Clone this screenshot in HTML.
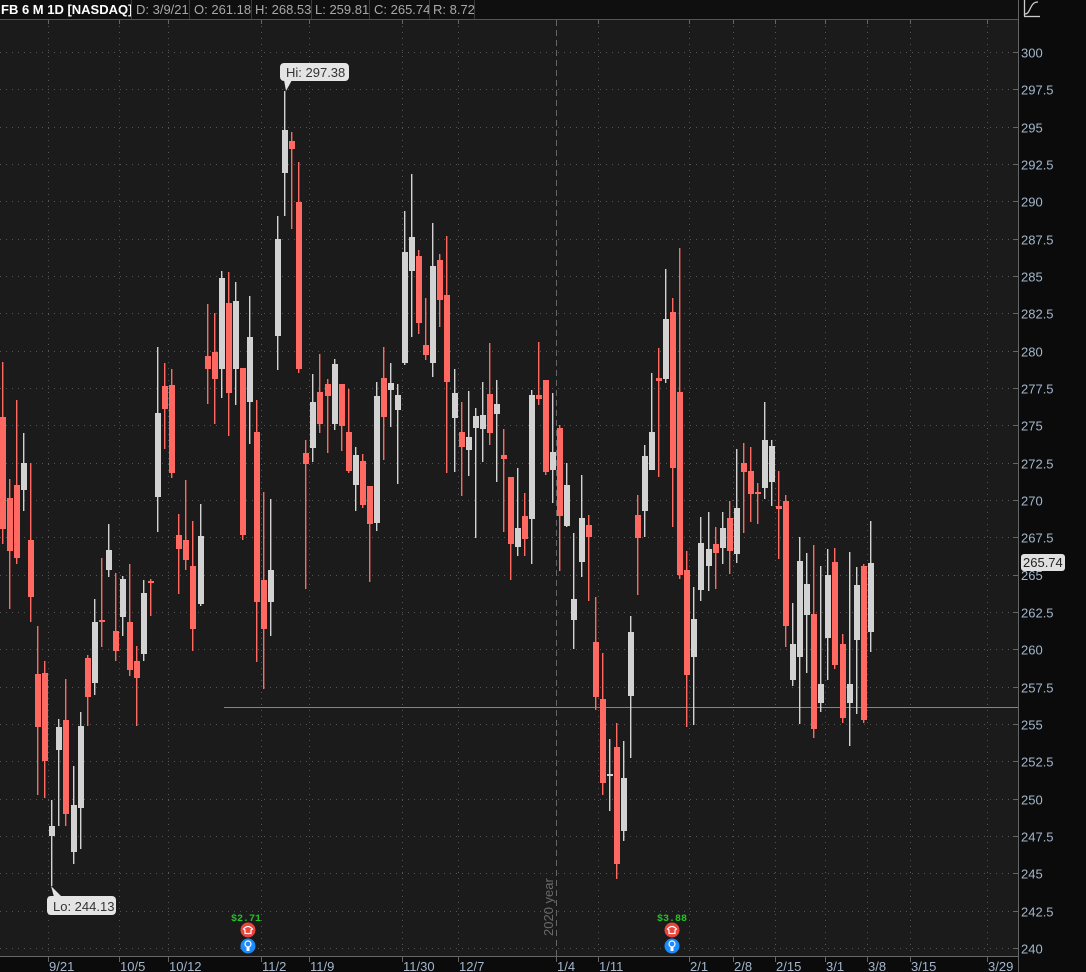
<!DOCTYPE html>
<html><head><meta charset="utf-8">
<style>
html,body{margin:0;padding:0;background:#0b0b0b;}
body{width:1086px;height:972px;overflow:hidden;position:relative;font-family:"Liberation Sans",sans-serif;}
#hdr{position:absolute;left:0;top:0;width:1018px;height:19px;background:#0f0f0f;border-bottom:1px solid #555;}
.seg{position:absolute;top:0;height:19px;line-height:19px;font-size:13px;color:#a8a8a8;white-space:nowrap;}
.dv{position:absolute;top:0;width:1px;height:19px;background:#3a3a3a;}
svg{position:absolute;left:0;top:0;}
</style></head><body>
<svg id="c" width="1086" height="972" xmlns="http://www.w3.org/2000/svg">
<rect x="0" y="20" width="1018" height="936" fill="#1b1b1b"/>
<g id="grid"></g>
<line x1="224" y1="707.5" x2="1018" y2="707.5" stroke="#d0655c" stroke-width="1"/>
<g id="candles"></g>
<line x1="1018.5" y1="0" x2="1018.5" y2="972" stroke="#666" stroke-width="1"/>
<line x1="0" y1="956.5" x2="1018" y2="956.5" stroke="#666" stroke-width="1"/>
<g id="axis" font-family="Liberation Sans, sans-serif" font-size="13" fill="#a3b6cc"></g>
<!-- Hi label -->
<path d="M284 80 L286 91 L292 80 Z" fill="#e4e4e4"/>
<rect x="280" y="63" width="69" height="18" rx="4" fill="#e4e4e4"/>
<text x="286" y="77" font-size="13" fill="#333" font-family="Liberation Sans, sans-serif">Hi: 297.38</text>
<!-- Lo label -->
<path d="M51 886 L54 897 L62 897 Z" fill="#e4e4e4"/>
<rect x="47" y="896" width="69" height="19" rx="4" fill="#e4e4e4"/>
<text x="53" y="911" font-size="13" fill="#333" font-family="Liberation Sans, sans-serif">Lo: 244.13</text>
<!-- price box -->
<rect x="1021" y="554" width="44" height="17" rx="3" fill="#e0e0e0"/>
<text x="1023" y="567" font-size="13" fill="#222" font-family="Liberation Sans, sans-serif">265.74</text>
<!-- 2020 year -->
<text transform="translate(553,936) rotate(-90)" font-size="13" fill="#6a6a6a" font-family="Liberation Sans, sans-serif">2020 year</text>
<!-- earnings -->
<g font-family="Liberation Mono, monospace" font-size="10" font-weight="bold" fill="#22c322">
<text x="231" y="921">$2.71</text><text x="657" y="921">$3.88</text></g>
<g id="earn"></g>
<!-- top right icon -->
<path d="M1025 14 C1028 14 1029 11 1031 7 C1033 3 1035 2 1038 2" stroke="#ccc" stroke-width="1.3" fill="none"/>
<line x1="1024" y1="16.5" x2="1040" y2="16.5" stroke="#ccc" stroke-width="1.3"/>
<line x1="1024.5" y1="0" x2="1024.5" y2="16" stroke="#ccc" stroke-width="1.3"/>
</svg>
<div id="hdr">
<div class="seg" style="left:1px;color:#fff;font-weight:bold;">FB 6 M 1D [NASDAQ]</div><div class="dv" style="left:131px"></div>
<div class="seg" style="left:136px">D: 3/9/21</div><div class="dv" style="left:189px"></div>
<div class="seg" style="left:194px">O: 261.18</div><div class="dv" style="left:251px"></div>
<div class="seg" style="left:255px">H: 268.53</div><div class="dv" style="left:311px"></div>
<div class="seg" style="left:315px">L: 259.81</div><div class="dv" style="left:369px"></div>
<div class="seg" style="left:374px">C: 265.74</div><div class="dv" style="left:429px"></div>
<div class="seg" style="left:433px">R: 8.72</div><div class="dv" style="left:474px"></div>
</div>
<script>
var NS="http://www.w3.org/2000/svg";
function el(t,a,p){var e=document.createElementNS(NS,t);for(var k in a)e.setAttribute(k,a[k]);p.appendChild(e);return e;}
var grid=document.getElementById('grid'),axis=document.getElementById('axis');
for(var k=0;k<=24;k++){var p=300-k*2.5;var y=Math.round(52+k*37.333)+0.5;
 el('line',{x1:0,y1:y,x2:1012,y2:y,stroke:'#555','stroke-width':1,'stroke-dasharray':'1 5'},grid);
 el('line',{x1:1013,y1:y,x2:1018,y2:y,stroke:'#666','stroke-width':1},grid);
 if(p!=265){var t=el('text',{x:1021,y:y+5},axis);t.textContent=(p%1==0?p.toFixed(0):p.toFixed(1));}
}
var t265=el('text',{x:1021,y:580},axis);t265.textContent='265';
var vg=[[48,'9/21'],[119,'10/5'],[168,'10/12'],[261,'11/2'],[309,'11/9'],[402,'11/30'],[458,'12/7'],[556,'1/4'],[598,'1/11'],[689,'2/1'],[733,'2/8'],[775,'2/15'],[825,'3/1'],[867,'3/8'],[910,'3/15'],[987,'3/29']];
vg.forEach(function(v){var x=v[0]+0.5;
 if(v[0]==556)el('line',{x1:x,y1:20,x2:x,y2:956,stroke:'#666','stroke-width':1,'stroke-dasharray':'6 4'},grid);
 else el('line',{x1:x,y1:20,x2:x,y2:956,stroke:'#555','stroke-width':1,'stroke-dasharray':'1 5'},grid);
 el('line',{x1:x,y1:956,x2:x,y2:962,stroke:'#666','stroke-width':1},grid);
 el('line',{x1:x,y1:19,x2:x,y2:24,stroke:'#666','stroke-width':1},grid);
 var t=el('text',{x:v[0]+1,y:971},axis);t.textContent=v[1];});
var D=[
[0,'r',362,417,529,544],[1,'r',479,498,551,609],[2,'r',400,485,558,564],[3,'g',433,463,490,511],[4,'r',463,540,597,622],
[5,'r',626,674,727,795],[6,'r',661,673,761,798],[7,'g',800,826,836,886],[8,'g',719,727,750,826],[9,'r',679,720,814,826],
[10,'g',766,805,852,864],[11,'g',712,726,808,849],[12,'r',655,658,697,726],[13,'g',599,622,683,695],[14,'r',558,620,622,647],
[15,'g',524,550,570,577],[16,'r',573,631,651,661],[17,'g',576,579,617,636],[18,'r',564,622,670,676],[19,'r',646,661,678,726],
[20,'g',580,593,654,661],[21,'r',579,581,583,616],[22,'g',347,413,497,532],[23,'r',363,386,409,449],[24,'r',369,385,473,478],
[25,'r',514,535,549,594],[26,'r',480,540,560,570],[27,'r',521,566,629,651],[28,'g',504,536,604,606],[29,'r',304,356,369,404],
[30,'r',313,352,379,424],[31,'g',271,278,369,398],[32,'r',272,303,393,436],[33,'g',282,301,369,405],[34,'r',368,368,535,540],
[35,'g',296,337,402,444],[36,'r',400,432,602,662],[37,'r',492,580,629,689],[38,'g',499,570,602,636],[39,'g',216,239,336,370],
[40,'g',91,130,173,216],[41,'r',132,141,149,229],[42,'r',162,202,369,373],[43,'r',440,453,464,589],[44,'g',374,402,448,462],
[45,'r',354,392,424,433],[46,'r',379,384,396,453],[47,'g',359,364,424,430],[48,'r',384,384,426,451],[49,'r',389,432,471,473],
[50,'g',447,455,485,511],[51,'r',454,461,505,508],[52,'r',486,486,524,582],[53,'g',382,396,523,531],[54,'r',347,378,417,460],
[55,'g',363,383,390,427],[56,'g',384,395,410,484],[57,'g',211,252,363,365],[58,'g',174,237,271,337],[59,'r',250,256,323,334],
[60,'r',298,345,355,360],[61,'g',223,266,363,377],[62,'r',254,260,300,327],[63,'r',236,295,382,473],[64,'g',369,393,418,472],
[65,'r',402,432,447,496],[66,'g',391,437,450,476],[67,'g',408,416,428,538],[68,'g',382,415,429,462],[69,'r',343,394,433,445],
[70,'g',380,404,414,482],[71,'r',429,455,459,532],[72,'r',477,477,544,580],[73,'g',468,528,547,556],[74,'r',493,516,539,556],
[75,'g',390,395,519,564],[76,'r',342,395,399,405],[77,'r',380,380,472,475],[78,'g',393,452,470,503],[79,'r',425,428,516,571],
[80,'g',463,485,526,527],[81,'g',533,599,620,649],[82,'g',475,518,562,577],[83,'r',515,525,537,601],[84,'r',597,642,697,710],
[85,'r',653,699,783,795],[86,'g',739,774,776,811],[87,'r',723,747,864,879],[88,'g',741,778,831,841],[89,'g',616,632,696,758],
[90,'r',495,515,538,595],[91,'g',445,456,511,537],[92,'g',373,432,470,470],[93,'r',348,378,381,477],[94,'g',269,319,379,383],
[95,'r',298,312,468,527],[96,'r',248,392,575,579],[97,'r',551,570,675,727],[98,'g',587,619,657,725],[99,'g',517,543,590,601],
[100,'g',512,549,566,591],[101,'r',527,544,553,589],[102,'g',512,528,548,564],[103,'r',501,518,551,574],[104,'g',449,508,554,563],
[105,'r',443,463,472,533],[106,'r',447,471,494,522],[107,'r',483,492,493,524],[108,'g',402,440,488,499],[109,'g',440,446,482,506],
[110,'r',471,506,509,559],[111,'r',495,501,626,647],[112,'g',603,644,680,686],[113,'g',537,561,657,724],[114,'g',553,584,615,673],
[115,'r',545,614,729,738],[116,'g',566,684,703,712],[117,'g',549,575,638,680],[118,'r',548,562,665,669],[119,'r',634,644,718,723],
[120,'g',552,684,703,746],[121,'g',567,585,640,714],[122,'r',564,566,720,723],[123,'g',521,563,632,652]];
var cg=document.getElementById('candles');
D.forEach(function(d){var x=Math.round(d[0]*7.055);var col=d[1]=='r'?'#ff6961':'#d2d2d2';
 el('rect',{x:x+2,y:d[2],width:1.4,height:d[5]-d[2],fill:col},cg);
 var h=Math.max(2,d[4]-d[3]);
 el('rect',{x:x,y:d[3],width:6,height:h,fill:col},cg);});
var eg=document.getElementById('earn');
[248,672].forEach(function(cx){
 el('circle',{cx:cx,cy:930,r:7.5,fill:'#e8453c'},eg);
 el('path',{d:'M'+(cx-4.5)+' 929 Q'+cx+' 924 '+(cx+4.5)+' 929 L'+(cx+3)+' 930 L'+(cx+3)+' 933.5 L'+(cx-3)+' 933.5 L'+(cx-3)+' 930 Z',fill:'none',stroke:'#fff','stroke-width':1.2},eg);
 el('circle',{cx:cx,cy:946,r:7.5,fill:'#1a8cff'},eg);
 el('circle',{cx:cx,cy:944,r:3,fill:'none',stroke:'#fff','stroke-width':1.2},eg);
 el('rect',{x:cx-1.5,y:947,width:3,height:4,fill:'#fff'},eg);});
</script>
</body></html>
